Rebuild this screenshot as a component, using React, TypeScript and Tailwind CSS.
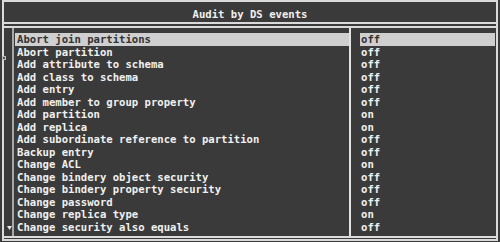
import React from "react"

const rows: [string, string][] = [
  ["Abort join partitions", "off"],
  ["Abort partition", "off"],
  ["Add attribute to schema", "off"],
  ["Add class to schema", "off"],
  ["Add entry", "off"],
  ["Add member to group property", "off"],
  ["Add partition", "on"],
  ["Add replica", "on"],
  ["Add subordinate reference to partition", "off"],
  ["Backup entry", "off"],
  ["Change ACL", "on"],
  ["Change bindery object security", "off"],
  ["Change bindery property security", "off"],
  ["Change password", "off"],
  ["Change replica type", "on"],
  ["Change security also equals", "off"],
]

export default function App() {
  return (
    <div className="w-[500px] h-[242px] bg-[#3a3a3a] text-[#f0f0f0] font-['DejaVu_Sans_Mono',monospace] text-[10.6px] font-bold leading-[12.5px]">
      <div className="relative ml-[2px] mr-[2px] h-[241px] border-2 border-[#dadada] flex flex-col">
        {/* title */}
        <div className="h-[22px] pt-[5px] border-b-2 border-[#dadada] flex items-center justify-center">
          Audit by DS events
        </div>
        {/* list */}
        <div className="mt-[2px] flex-1 border-t-2 border-b-2 border-[#dadada] flex mb-[1px]">
          <div className="w-[10px] border-r-2 border-[#a8a8a8] flex flex-col justify-end items-center pb-[6px] pl-[2px]">
            <svg width="5" height="4" viewBox="0 0 5 4">
              <path d="M0 0 H5 L2.5 4 Z" fill="#e6e6e6" />
            </svg>
          </div>
          <div className="w-[335px] pt-[5px]">
            {rows.map(([name], i) => (
              <div
                key={name}
                className={`ml-[1px] h-[12.5px] pl-[2px] whitespace-nowrap ${i === 0 ? "bg-[#cfcfcf] text-[#333333]" : ""}`}
              >
                {name}
              </div>
            ))}
          </div>
          <div className="w-[2px] bg-[#e2e2e2]" />
          <div className="flex-1 pt-[5px] pl-[9px] pr-[1px]">
            {rows.map(([name, value], i) => (
              <div
                key={name}
                className={`h-[12.5px] pl-[1px] ${i === 0 ? "bg-[#cfcfcf] text-[#333333]" : ""}`}
              >
                {value}
              </div>
            ))}
          </div>
        </div>
        {/* scroll position marker */}
        <div className="absolute left-[-2px] top-[54px] w-[4px] h-[4px] border border-[#bdbdbd] bg-[#5a5a5a]" />
      </div>
    </div>
  )
}
